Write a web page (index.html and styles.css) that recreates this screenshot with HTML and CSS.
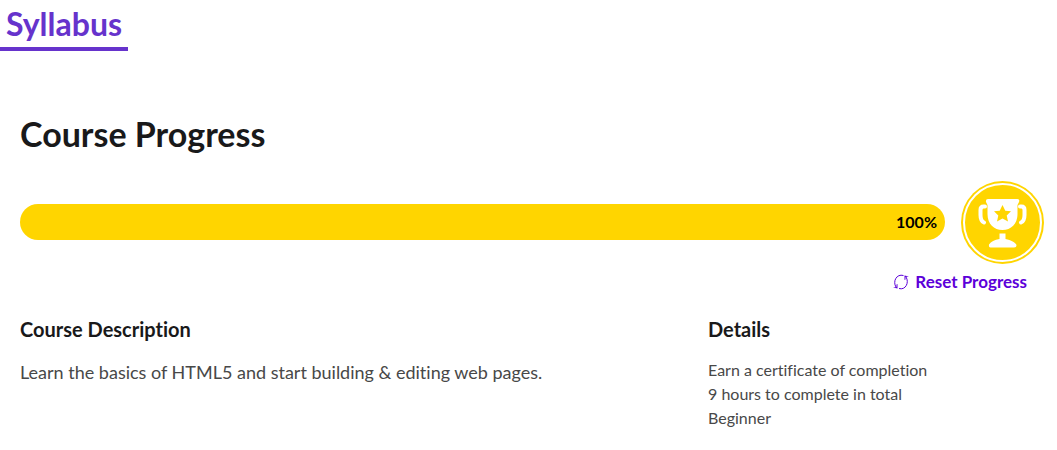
FILE: index.html
```html
<!DOCTYPE html>
<html lang="en">
<head>
<meta charset="utf-8">
<meta name="viewport" content="width=device-width, initial-scale=1">
<title>Syllabus</title>
<link rel="stylesheet" href="styles.css">
</head>
<body>
<nav class="tabs"><a class="tab" href="#syllabus" aria-current="page">Syllabus</a></nav>
<main class="syllabus" id="syllabus">
  <h1 class="title">Course Progress</h1>
  <div class="progress-row">
    <div class="bar" role="progressbar" aria-label="Course progress" aria-valuemin="0" aria-valuemax="100" aria-valuenow="100">
      <div class="bar-fill">100%</div>
    </div>
    <svg class="trophy" viewBox="0 0 83 83" aria-hidden="true">
      <circle cx="41.5" cy="41.5" r="41.5" fill="#ffd500"/>
      <circle cx="41.5" cy="41.5" r="38.5" fill="none" stroke="#fff" stroke-width="2"/>
      <path fill="#fff" d="M27 18H56.500Q59 18 58 21L56.500 24V33C56.500 43 50 49 41.500 49S26.500 43 26.500 33V24L25 21Q24.500 18 27 18Z"/>
      <path fill="none" stroke="#fff" stroke-width="4" stroke-linecap="round" stroke-linejoin="round" d="M24 25.500H22.500Q19.500 25.500 19.500 29V34Q19.500 40 23 41.500M59 25.500H60.500Q63.500 25.500 63.500 29V34Q63.500 40 60 41.500"/>
      <path fill="#fff" d="M38.500 52.500H44.500V58C50 59 54.500 61.500 55.500 64Q55.500 66.500 53 66.500H29.500Q27.500 66.500 28 63.500C30 60.500 33.500 59 38.500 58Z"/>
      <path fill="#ffd500" d="M41.500 24L44.300 29.700L50 30.300L45.700 34.500L47 40.500L41.500 37.500L36 40.500L37.300 34.500L33 30.300L38.700 29.700Z"/>
    </svg>
  </div>
  <div class="actions">
    <button class="reset" type="button">
      <svg class="reset-icon" viewBox="0 0 16 16" aria-hidden="true">
        <path fill="none" stroke="currentColor" d="M10.500 1.500C3.500-.5-.5 7.500 3 13M6 14.500C12.500 16.500 16.500 8.500 13 3"/>
        <path fill="currentColor" d="M0 13.500L4.500 14.500V10L3.500 10.500V13ZM16 2.500L11.500 1.500V6L12.500 5.500V3Z"/>
      </svg>
      Reset Progress
    </button>
  </div>
  <div class="info">
    <section>
      <h2 class="heading">Course Description</h2>
      <p class="description">Learn the basics of HTML5 and start building &amp; editing web pages.</p>
    </section>
    <section>
      <h2 class="heading">Details</h2>
      <ul class="details">
        <li>Earn a certificate of completion</li>
        <li>9 hours to complete in total</li>
        <li>Beginner</li>
      </ul>
    </section>
  </div>
</main>
</body>
</html>
```
FILE: styles.css
```css
* { box-sizing: border-box; }
body { margin: 0; background: #fff; color: #19191a; font-family: Lato, "Liberation Sans", sans-serif; font-variant-ligatures: none; }
h1, h2, p, ul { margin: 0; padding: 0; }
.tabs { display: flex; }
.tab { padding: 4px 6px 3px; border-bottom: 4px solid #6633cc; color: #6633cc; font-size: 32px; font-weight: 700; line-height: 40px; text-decoration: none; }
.syllabus { padding: 60px 13px 20px 20px; }
.title { font-size: 34px; font-weight: 700; line-height: 46px; }
.progress-row { display: flex; align-items: center; gap: 16px; margin-top: 24px; }
.bar { flex: 1; height: 36px; margin-bottom: 1px; }
.bar-fill { width: 100%; height: 100%; padding-right: 8px; border-radius: 18px; background: #ffd500; color: #000; font-size: 16px; font-weight: 700; line-height: 36px; text-align: right; }
.trophy { flex: none; width: 83px; height: 83px; }
.actions { display: flex; justify-content: flex-end; padding-right: 17px; margin-top: 6px; }
.reset { display: flex; align-items: center; gap: 6px; padding: 0; border: 0; background: none; color: #5c00d9; font: inherit; font-size: 17px; font-weight: 700; line-height: 24px; cursor: pointer; }
.reset-icon { width: 16px; height: 16px; }
.info { display: grid; grid-template-columns: 2fr 1fr; gap: 16px; margin-top: 22px; }
.heading { font-size: 20px; font-weight: 700; line-height: 26px; }
.description { margin-top: 16px; color: #484848; font-size: 18px; line-height: 28px; }
.details { margin-top: 16px; color: #484848; font-size: 16px; line-height: 24px; list-style: none; }
```
